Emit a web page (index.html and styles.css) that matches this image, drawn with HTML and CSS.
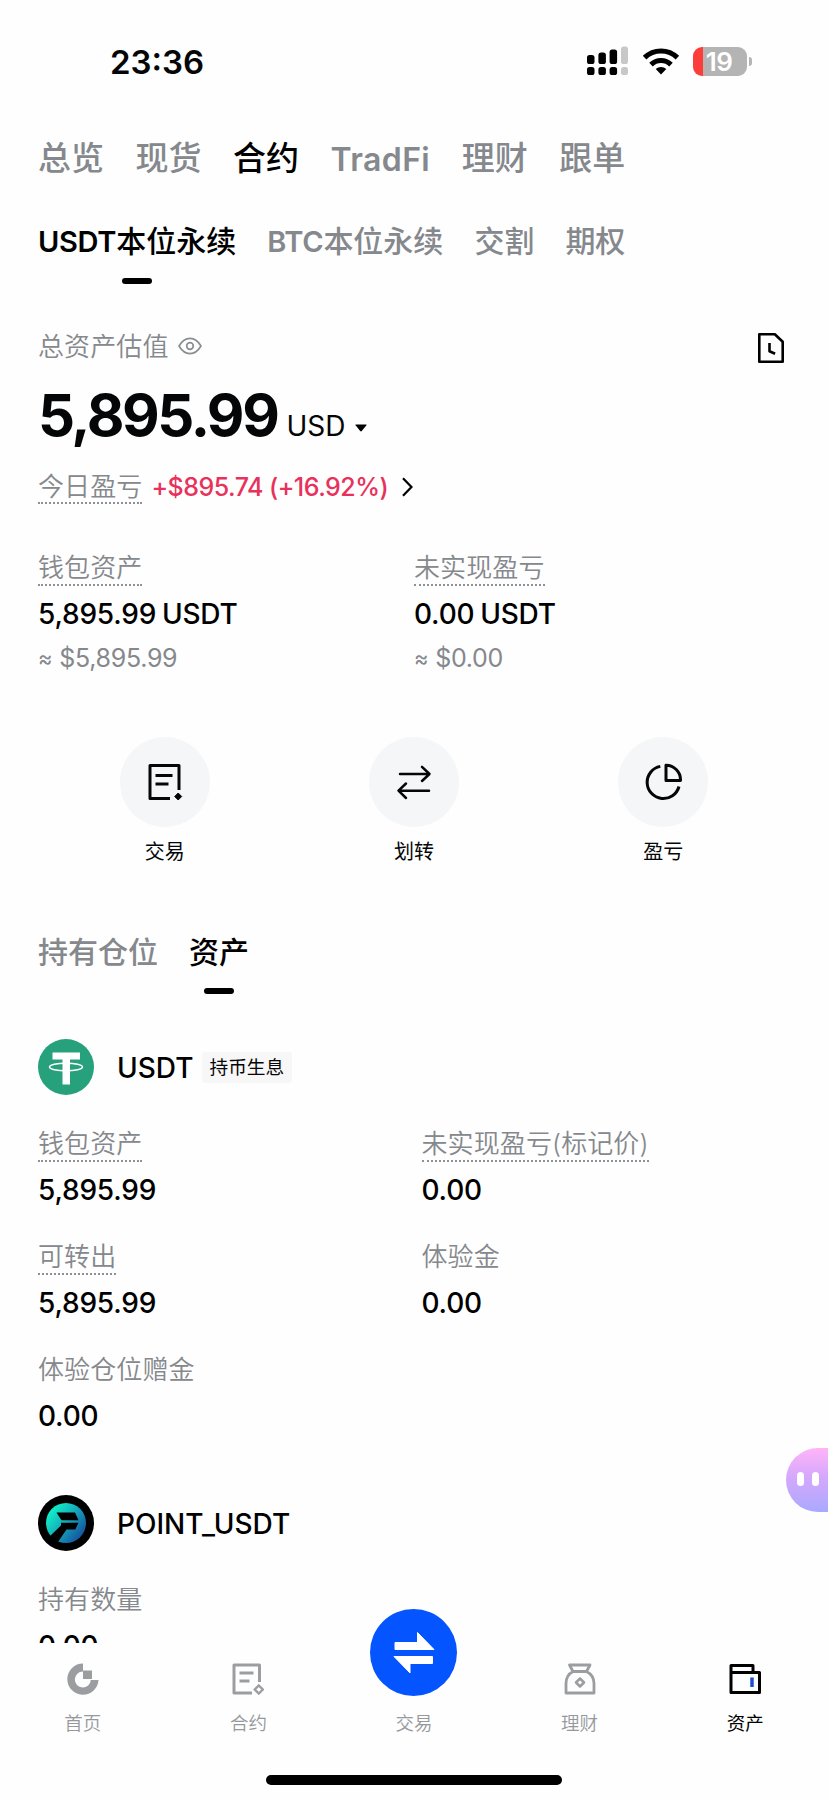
FILE: index.html
```html
<!DOCTYPE html>
<html lang="zh-CN">
<head>
<meta charset="utf-8">
<title>资产</title>
<link rel="stylesheet" href="styles.css">
</head>
<body>
<div class="app">
  <main class="screen">
    <header class="status">
      <span class="status-time">23:36</span>
      <div class="status-icons">
        <svg class="signal" width="42" height="30" viewBox="0 0 42 30">
          <g fill="#000">
            <rect x="0" y="9" width="7.5" height="9" rx="2.6"/><rect x="11.4" y="6.5" width="7.5" height="11.5" rx="2.6"/><rect x="22.6" y="3.5" width="7.5" height="14.5" rx="2.6"/>
            <rect x="0" y="21" width="7.5" height="8" rx="2.6"/><rect x="11.4" y="21" width="7.5" height="8" rx="2.6"/><rect x="22.6" y="21" width="7.5" height="8" rx="2.6"/>
          </g>
          <g fill="#c8c8c8"><rect x="34" y="0.5" width="7" height="17.5" rx="2.6"/><rect x="34" y="21" width="7" height="8" rx="2.6"/></g>
        </svg>
        <svg class="wifi" width="38" height="28" viewBox="0 0 38 28">
          <g fill="none" stroke="#000" stroke-width="5"><path d="M2.6 10.6a23.4 23.4 0 0 1 32.8 0"/><path d="M9 17.6a14.4 14.4 0 0 1 20 0"/></g>
          <path d="M19 27.5l-5.3-5.4a7.6 7.6 0 0 1 10.6 0z"/>
        </svg>
        <div class="battery"><div class="battery-body"><span>19</span></div><i class="battery-cap"></i></div>
      </div>
    </header>

    <nav class="tabs-main">
      <span>总览</span><span>现货</span><span class="on">合约</span><span class="latin">TradFi</span><span>理财</span><span>跟单</span>
    </nav>

    <nav class="tabs-sub">
      <span class="on"><b>USDT</b>本位永续</span><span><b>BTC</b>本位永续</span><span>交割</span><span>期权</span>
    </nav>

    <section class="summary">
      <div class="valuation">
        <span class="label">总资产估值</span>
        <svg class="eye" width="24" height="18" viewBox="0 0 24 18" fill="none" stroke="#8a8d91" stroke-width="1.7" stroke-linejoin="round"><path d="M1 9C4 4 8 1.4 12 1.4S20 4 23 9c-3 5-7 7.6-11 7.6S4 14 1 9z"/><circle cx="12" cy="9" r="3.3"/></svg>
        <svg class="history" width="26" height="30" viewBox="0 0 26 30" fill="none" stroke="#000" stroke-width="2.6" stroke-linejoin="round"><path d="M1.3 1.3h15.5l7.9 7.4v20H1.3z"/><path d="M11.5 10v8.2l5.6 2.6"/></svg>
      </div>
      <div class="total">
        <strong>5,895.99</strong><span class="unit">USD</span>
        <svg width="12" height="8" viewBox="0 0 12 8"><path d="M1 .5h10q1 0 .4.8L6.8 7q-.8.9-1.6 0L.6 1.300Q0 .5 1 .5z"/></svg>
      </div>
      <div class="pnl">
        <span class="label dotted">今日盈亏</span>
        <span class="gain"><span>+$895.74</span><span>(+16.92%)</span></span>
        <svg width="11" height="20" viewBox="0 0 11 20" fill="none" stroke="#000" stroke-width="2.3"><path d="M1 1.300l8.500 8.700L1 18.700"/></svg>
      </div>
      <div class="stats">
        <div><div class="label dotted">钱包资产</div><div class="value">5,895.99 USDT</div><div class="approx"><i>≈</i>$5,895.99</div></div>
        <div><div class="label dotted">未实现盈亏</div><div class="value">0.00 USDT</div><div class="approx"><i>≈</i>$0.00</div></div>
      </div>
    </section>

    <section class="actions">
      <div class="action">
        <div class="action-icon"><svg width="36" height="38" viewBox="0 0 36 38" fill="none" stroke="#050607" stroke-width="3"><path d="M32 27V2.500H3V35.500H23" stroke-linejoin="round"/><path d="M8.500 12.500H25.500M8.500 21H21.500"/><path d="M31.200 30l3.500 3.500-3.500 3.500-3.500-3.500z" fill="#050607" stroke="#050607" stroke-width="1"/></svg></div>
        <span>交易</span>
      </div>
      <div class="action">
        <div class="action-icon"><svg width="36" height="36" viewBox="0 0 36 36" fill="none" stroke="#050607" stroke-width="2.500" stroke-linecap="round" stroke-linejoin="round"><path d="M4 10H33M26 2.800L33.500 10 26 17"/><path d="M33 26.700H3M10 19.500L2.500 26.700 10 34"/></svg></div>
        <span>划转</span>
      </div>
      <div class="action">
        <div class="action-icon"><svg width="38" height="38" viewBox="0 0 38 38" fill="none" stroke="#050607" stroke-width="3"><path d="M16.300 3.400A16.200 16.200 0 1 0 35 23.500"/><path d="M22 2.200V17.500H36.500A14.700 14.700 0 0 0 22 2.200z" stroke-linejoin="round"/></svg></div>
        <span>盈亏</span>
      </div>
    </section>

    <nav class="tabs-list"><span>持有仓位</span><span class="on">资产</span></nav>

    <section class="coin">
      <div class="coin-head">
        <svg width="56" height="56" viewBox="0 0 56 56"><circle cx="28" cy="28" r="28" fill="#26a17b"/><path d="M14.500 13.500H42V20.500H32V45.500H24.500V20.500H14.500z" fill="#fff"/><ellipse cx="28" cy="28" rx="16.500" ry="3.800" fill="none" stroke="#fff" stroke-width="1.500"/></svg>
        <span class="coin-name">USDT</span><span class="badge">持币生息</span>
      </div>
      <div class="fields">
        <div><div class="label dotted">钱包资产</div><div class="value">5,895.99</div></div>
        <div><div class="label dotted">未实现盈亏(标记价)</div><div class="value">0.00</div></div>
        <div><div class="label dotted">可转出</div><div class="value">5,895.99</div></div>
        <div><div class="label">体验金</div><div class="value">0.00</div></div>
        <div><div class="label">体验仓位赠金</div><div class="value">0.00</div></div>
      </div>
    </section>

    <section class="coin">
      <div class="coin-head">
        <svg width="56" height="56" viewBox="0 0 56 56">
          <defs><linearGradient id="pt" x1="0.1" y1="0.2" x2="0.9" y2="0.85"><stop offset="0" stop-color="#0ff0c8"/><stop offset=".4" stop-color="#14b5bd"/><stop offset="1" stop-color="#1450a0"/></linearGradient></defs>
          <circle cx="28" cy="28" r="28"/><circle cx="28" cy="28" r="20" fill="url(#pt)"/>
          <path d="M18.500 17.500H37L40.500 25.300H23.500z"/><path d="M23 27.700H40.500L37.300 34.500H28.500L20 47 10 43 23 30.500z"/>
        </svg>
        <span class="coin-name">POINT_USDT</span>
      </div>
      <div class="fields">
        <div><div class="label">持有数量</div><div class="value">0.00</div></div>
      </div>
    </section>
  </main>

  <nav class="bottom">
    <div class="nav-item">
      <svg width="32" height="32" viewBox="0 0 32 32" fill="#9b9da0"><path d="M16 .5V8.500A8 8 0 1 0 23.800 17H31.500A15.600 15.600 0 1 1 16 .5z"/><rect x="16" y="7.500" width="9" height="8.500"/></svg>
      <span>首页</span>
    </div>
    <div class="nav-item">
      <svg width="32" height="32" viewBox="0 0 32 32" fill="none" stroke="#9b9da0" stroke-width="3"><path d="M27.500 19V2H2V30H20" stroke-linejoin="round"/><path d="M7.500 10H21.500M7.500 18H17.500"/><path d="M26.800 22.500l4 4-4 4-4-4z" stroke-width="2.400"/></svg>
      <span>合约</span>
    </div>
    <div class="nav-item trade">
      <div class="trade-btn"><svg width="42" height="44" viewBox="0 0 42 44" fill="#fff" stroke="#fff" stroke-width="1" stroke-linejoin="round"><path d="M2 11.500H24.500V1.500L41 18.500H2z"/><path d="M1 25.500H39.500V32.500H17V42z"/></svg></div>
      <span>交易</span>
    </div>
    <div class="nav-item">
      <svg width="32" height="32" viewBox="0 0 32 32" fill="none" stroke="#9b9da0" stroke-width="2.800" stroke-linejoin="round"><path d="M5.500 2H26L22.500 8.500H9zM9.300 8.500C4 11 2 15.500 2 20.500V30H30V20.500C30 15.500 27.500 11 22.500 8.500"/><path d="M16 15.500l4 4-4 4-4-4z" stroke-width="2.500"/></svg>
      <span>理财</span>
    </div>
    <div class="nav-item on">
      <svg width="32" height="32" viewBox="0 0 32 32" fill="none" stroke="#000" stroke-width="3" stroke-linejoin="round"><path d="M2 9.500V2.500H24V9.500M2 9.500H30.500V29.500H2z"/><path d="M23 14.500V24" stroke="#1d4fd0" stroke-width="3.500"/></svg>
      <span>资产</span>
    </div>
    <div class="home-bar"></div>
  </nav>

  <div class="bubble"><i></i><i></i></div>
</div>
</body>
</html>
```
FILE: styles.css
```css
* { box-sizing: border-box; }
body {
  margin: 0;
  background: #fefefe;
  color: #050607;
  font-family: Inter, "Noto Sans CJK SC", sans-serif;
}
i { font-style: normal; }
svg { display: block; flex: none; }
.app { position: relative; width: 828px; height: 1800px; overflow: hidden; }
.screen { height: 1643px; overflow: hidden; padding: 0 38px; }

.status { height: 123px; display: flex; align-items: center; justify-content: space-between; padding: 0 38px 1px 72px; }
.status-time { font-size: 33px; font-weight: 600; padding-top: 1px; }
.status-icons { display: flex; align-items: center; }
.wifi { margin-left: 13px; }
.battery { display: flex; align-items: center; margin-left: 13px; }
.battery-body {
  width: 54px; height: 29px; border-radius: 9px; padding-right: 2px;
  background: linear-gradient(90deg, #fc3d39 10px, #b4b4b4 10px);
  display: flex; align-items: center; justify-content: center;
  color: #fff; font-size: 26px; font-weight: 600; line-height: 29px; letter-spacing: -0.5px;
}
.battery-cap { width: 3px; height: 9px; margin-left: 2px; background: #b4b4b4; border-radius: 0 4px 4px 0; }

.tabs-main { height: 70px; display: flex; align-items: center; gap: 31.500px; color: #85888c; font-size: 33px; font-weight: 500; line-height: 72px; }
.tabs-main .latin { font-weight: 600; font-size: 32px; letter-spacing: 0.4px; padding-top: 3px; }
.on { color: #000; }

.tabs-sub, .tabs-list { display: flex; gap: 31px; color: #85888c; font-size: 30px; font-weight: 500; line-height: 40px; }
.tabs-sub { margin-top: 28px; height: 62px; }
.tabs-sub b { font-size: 29px; font-weight: 600; letter-spacing: -0.3px; }
.tabs-list { margin-top: 69px; height: 62px; }
.tabs-sub .on::after, .tabs-list .on::after {
  content: ""; display: block; width: 30px; height: 6px; border-radius: 3px; background: #000; margin: 16px auto 0;
}

.label { color: #85888c; font-size: 26px; font-weight: 350; line-height: 34px; letter-spacing: 0.1px; width: max-content; height: 35px; }
.dotted { border-bottom: 2px dotted #8d9094; }
.value { margin-top: 11px; font-size: 28px; font-weight: 500; line-height: 34px; height: 32px; letter-spacing: -0.200px; word-spacing: -1.500px; color: #000; }
.approx { display: flex; gap: 7px; margin-top: 13px; font-size: 25px; font-weight: 400; line-height: 32px; letter-spacing: -0.3px; color: #85888c; }
.approx i { font-size: 22px; }

.valuation { margin-top: 43px; height: 40px; display: flex; align-items: center; }
.valuation .label { height: 32px; }
.eye { margin-left: 9px; }
.history { margin: 3px 6px 0 auto; }
.total { margin-top: 19px; height: 60px; display: flex; align-items: baseline; line-height: 60px; }
.total strong { font-size: 58px; font-weight: 650; letter-spacing: -2.400px; }
.unit { margin-left: 9px; font-size: 28px; font-weight: 400; }
.total svg { margin-left: 10px; position: relative; top: -4px; }
.pnl { margin-top: 25px; height: 34px; display: flex; align-items: center; }
.pnl .label { height: 34px; }
.gain { display: flex; gap: 6px; margin-left: 9px; font-size: 25px; font-weight: 500; line-height: 34px; letter-spacing: -0.5px; color: #e8315b; }
.pnl svg { margin-left: 14px; }
.stats { margin-top: 47px; display: grid; grid-template-columns: 1fr 1fr; }

.actions { margin: 63px 2px 0; display: grid; grid-template-columns: repeat(3, 1fr); }
.action { display: flex; flex-direction: column; align-items: center; gap: 12px; font-size: 20px; line-height: 26px; height: 126px; }
.action-icon { width: 90px; height: 90px; flex: none; border-radius: 50%; background: #f4f6f8; display: flex; align-items: center; justify-content: center; }

.coin { margin-top: 45px; }
.coin + .coin { margin-top: 64px; }
.coin-head { height: 56px; display: flex; align-items: center; }
.coin-name { margin-left: 23px; font-size: 28px; font-weight: 500; line-height: 34px; padding-top: 1px; color: #000; }
.badge { margin-left: 9px; height: 31px; padding: 0 8px 0 7px; background: #f7f7f7; border-radius: 3px; font-size: 18.700px; line-height: 32px; }
.fields { margin-top: 32px; display: grid; grid-template-columns: 383.500px 1fr; row-gap: 35px; }

.bottom { position: relative; height: 157px; background: #fefefe; display: grid; grid-template-columns: repeat(5, 1fr); align-content: start; color: #96999c; }
.nav-item { display: flex; flex-direction: column; align-items: center; gap: 16px; padding-top: 20px; font-size: 18.500px; font-weight: 350; line-height: 24px; }
.nav-item.on { color: #000; font-weight: 400; }
.trade { padding-top: 0; margin-top: -34px; gap: 15px; }
.trade-btn { width: 87px; height: 87px; border-radius: 50%; background: #0454ff; display: flex; align-items: center; justify-content: center; }
.home-bar { grid-column: 1 / -1; justify-self: center; width: 296px; height: 10px; margin-top: 40px; border-radius: 5px; background: #000; }

.bubble {
  position: absolute; right: 0; top: 1448px; width: 42px; height: 64px; border-radius: 32px 0 0 32px;
  background: linear-gradient(180deg, #ffb4f8, #d5a8fc 45%, #a9a9ff);
  display: flex; align-items: center; gap: 8px; padding: 0 0 3px 11px;
}
.bubble i { width: 7px; height: 14px; border-radius: 3.500px; background: #fff; }
```
